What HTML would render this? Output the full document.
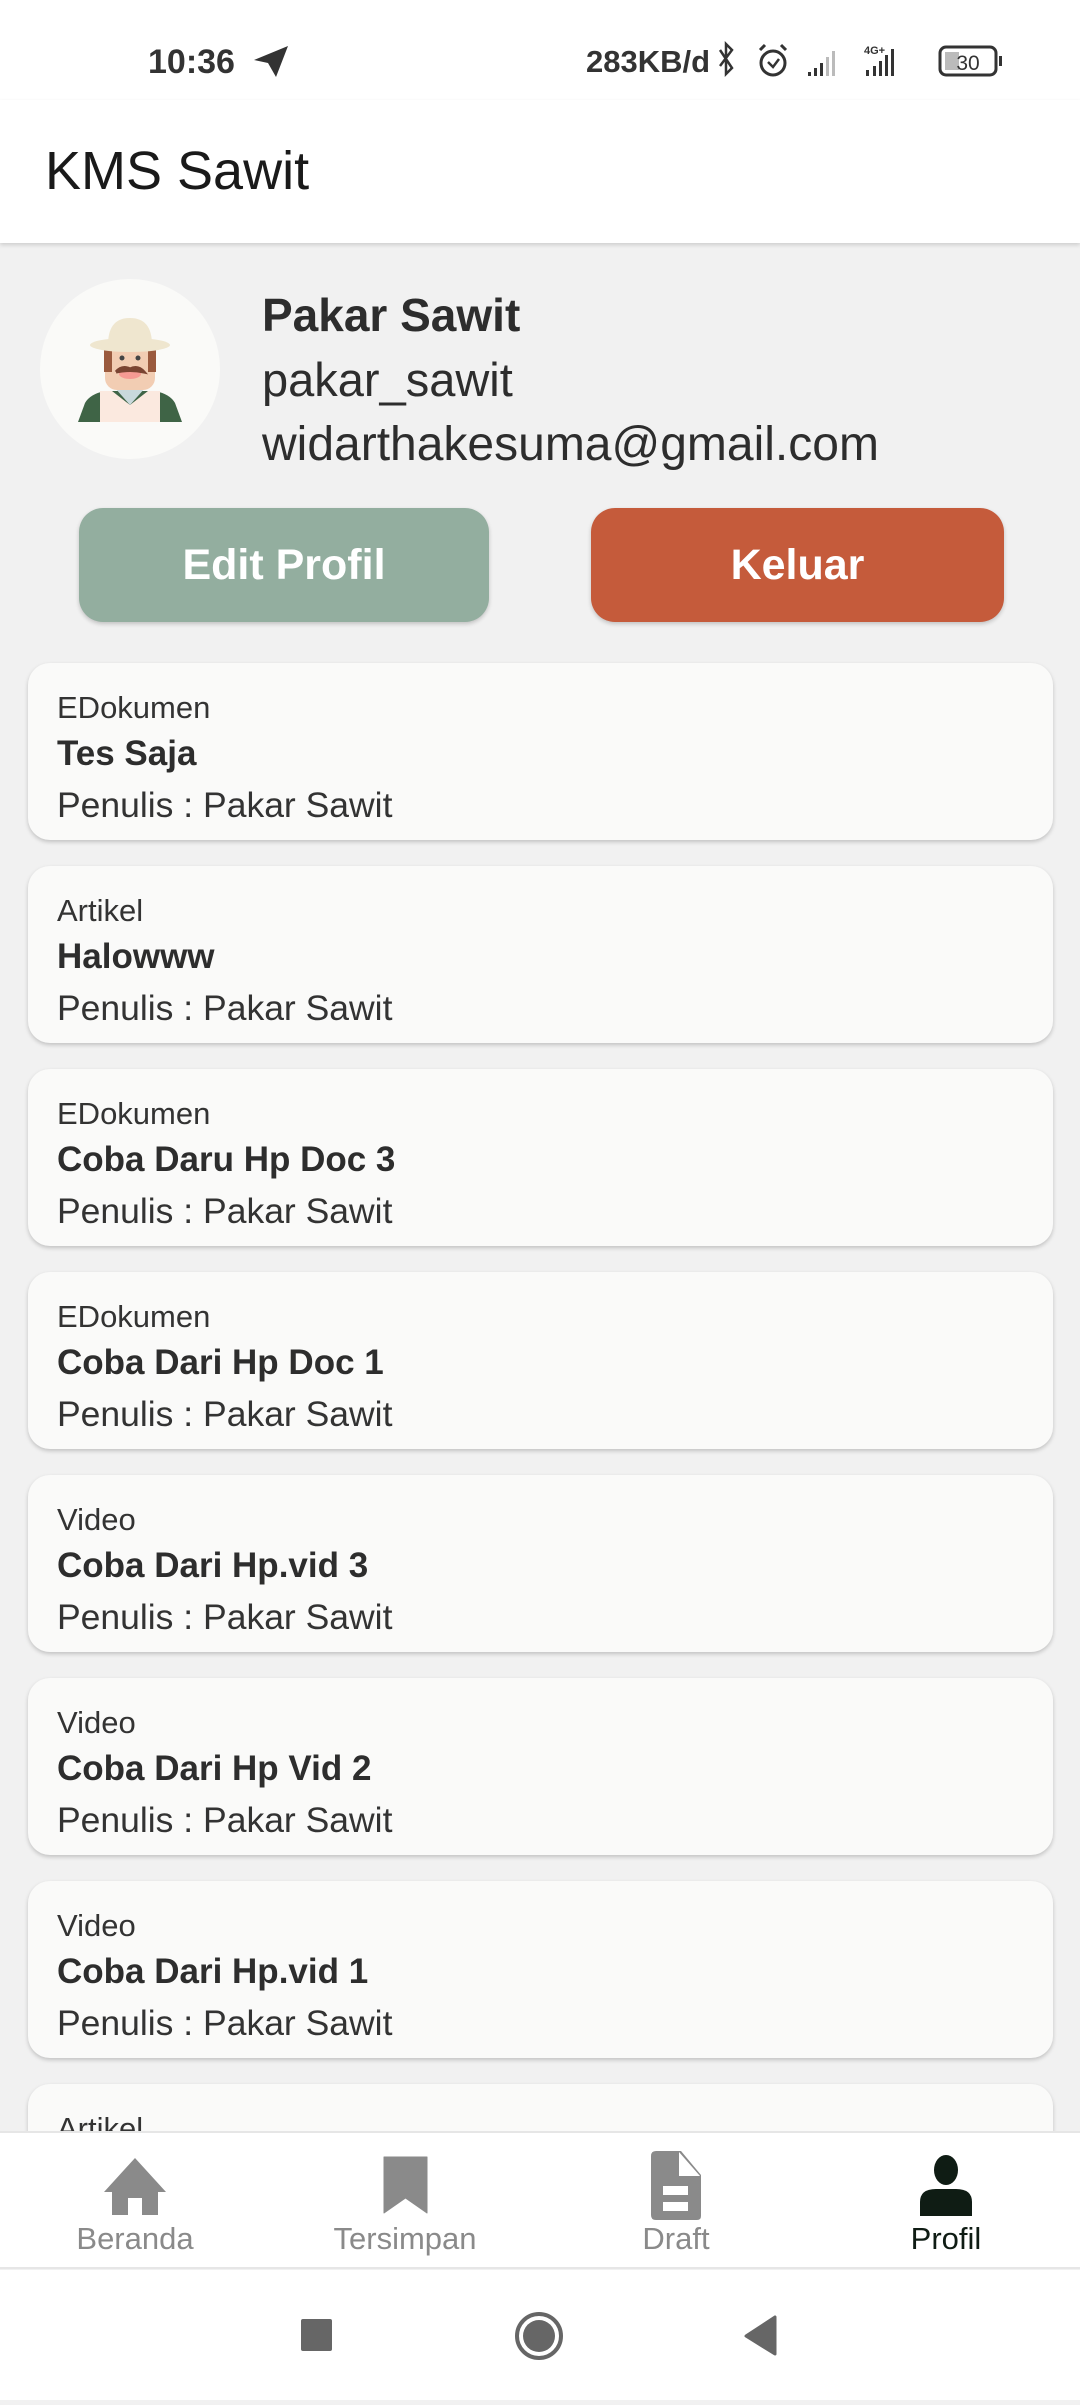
<!DOCTYPE html>
<html><head><meta charset="utf-8">
<style>
*{margin:0;padding:0;box-sizing:border-box}
body{width:1080px;height:2400px;background:#f1f1f1;font-family:"Liberation Sans",Roboto,sans-serif;position:relative;overflow:hidden;color:#2d2d2d}
.abs{position:absolute}
.status{top:0;left:0;width:1080px;height:100px;background:#fff}
.appbar{top:100px;left:0;width:1080px;height:143px;background:#fff;box-shadow:0 2px 4px rgba(0,0,0,.15)}
.btn{top:508px;height:114px;border-radius:24px;color:#fff;font-weight:bold;font-size:43px;display:flex;align-items:center;justify-content:center;box-shadow:0 2px 4px rgba(0,0,0,.2)}
.card{left:28px;width:1025px;height:177px;background:#fafaf9;border-radius:22px;box-shadow:0 2px 4px rgba(0,0,0,.2)}
.card .t{position:absolute;left:29px;top:27px;font-size:31px;color:#333}
.card .h{position:absolute;left:29px;top:71px;font-size:35px;font-weight:bold;color:#2d2d2d}
.card .a{position:absolute;left:29px;top:122px;font-size:35.5px;color:#333}
.nav{top:2131px;left:0;width:1080px;height:138px;background:#fff;border-top:2px solid #e6e6e6;border-bottom:2px solid #e6e6e6}
.lbl{position:absolute;top:88px;font-size:31px;color:#8a8a8a;transform:translateX(-50%)}
.sys{top:2270px;left:0;width:1080px;height:130px;background:#fff}
</style></head><body>
<div class="abs status">
 <div class="abs" style="left:148px;top:43px;font-size:34px;font-weight:bold;color:#333">10:36</div>
 <svg class="abs" style="left:252px;top:44px" width="38" height="34" viewBox="0 0 38 34"><path d="M36 2 L2 16 L16 19 L24 33 Z" fill="#333"/></svg>
 <div class="abs" style="left:586px;top:44px;font-size:31px;font-weight:bold;color:#333">283KB/d</div>
 <svg class="abs" style="left:716px;top:40px" width="300" height="42" viewBox="0 0 300 42">
  <path d="M4 10 L16 28 L10 34 L10 4 L16 10 L4 26" stroke="#333" stroke-width="2.5" fill="none"/>
  <circle cx="57" cy="23" r="12" stroke="#333" stroke-width="3" fill="none"/>
  <path d="M44 10 l5 -5 M70 10 l-5 -5" stroke="#333" stroke-width="3"/>
  <path d="M52 22 L57 27 L63 19" stroke="#333" stroke-width="2.5" fill="none"/>
  <path d="M92 36 h3 v-4 h-3z M98 36 h3 v-8 h-3z M104 36 h3 v-13 h-3z" fill="#333"/>
  <path d="M110 36 h3 v-19 h-3z M116 36 h3 v-25 h-3z" fill="#bbb"/>
  <text x="148" y="14" font-size="11" font-weight="bold" fill="#333" font-family="Liberation Sans">4G+</text>
  <path d="M150 36 h3 v-6 h-3z M157 36 h3 v-10 h-3z M163 36 h3 v-15 h-3z M169 36 h3 v-21 h-3z M175 36 h3 v-27 h-3z" fill="#333"/>
  <rect x="224" y="7" width="56" height="28" rx="6" stroke="#333" stroke-width="3" fill="none"/>
  <rect x="229" y="12" width="14" height="18" fill="#bbb"/>
  <rect x="283" y="16" width="3" height="10" fill="#333"/>
  <text x="252" y="30" font-size="21" fill="#333" text-anchor="middle" font-family="Liberation Sans">30</text>
 </svg>
</div>
<div class="abs appbar"><div class="abs" style="left:45px;top:40px;font-size:54px;color:#1a1a1a">KMS Sawit</div></div>

<svg class="abs" style="left:30px;top:270px" width="200" height="200" viewBox="0 0 200 200">
 <circle cx="100" cy="99" r="90" fill="#fafaf8"/>
 <path d="M48 152 L55 133 Q60 124 75 121 L125 121 Q140 124 145 133 L152 152 Z" fill="#3f6446"/>
 <path d="M70 121 L70 152 L130 152 L130 121 L118 121 L100 135 L82 121 Z" fill="#fbe9df"/>
 <path d="M85 118 L100 135 L115 118 Z" fill="#c9d9dc"/>
 <rect x="75" y="80" width="50" height="40" rx="12" fill="#f2cdb3"/>
 <rect x="74" y="80" width="8" height="22" fill="#9a5a3e"/>
 <rect x="118" y="80" width="8" height="22" fill="#9a5a3e"/>
 <ellipse cx="100" cy="104" rx="11" ry="5" fill="#f59a93"/>
 <path d="M86 102 Q92 95 100 99 Q108 95 114 102 Q100 99 86 102" fill="#7a4432" stroke="#7a4432" stroke-width="3"/>
 <circle cx="92" cy="88" r="2.5" fill="#444"/><circle cx="108" cy="88" r="2.5" fill="#444"/>
 <ellipse cx="100" cy="75" rx="40" ry="7" fill="#efe6cf"/>
 <path d="M78 75 Q78 48 100 48 Q122 48 122 75 Z" fill="#efe6cf"/>
</svg>
<div class="abs" style="left:262px;top:288px;font-size:46px;font-weight:bold;color:#2d2d2d">Pakar Sawit</div>
<div class="abs" style="left:262px;top:352px;font-size:47px;color:#2d2d2d">pakar_sawit</div>
<div class="abs" style="left:262px;top:417px;font-size:48px;color:#2d2d2d">widarthakesuma@gmail.com</div>

<div class="abs btn" style="left:79px;width:410px;background:#93ae9f">Edit Profil</div>
<div class="abs btn" style="left:591px;width:413px;background:#c55b3b">Keluar</div>

<div class="abs card" style="top:663px"><div class="t">EDokumen</div><div class="h">Tes Saja</div><div class="a">Penulis : Pakar Sawit</div></div>
<div class="abs card" style="top:866px"><div class="t">Artikel</div><div class="h">Halowww</div><div class="a">Penulis : Pakar Sawit</div></div>
<div class="abs card" style="top:1069px"><div class="t">EDokumen</div><div class="h">Coba Daru Hp Doc 3</div><div class="a">Penulis : Pakar Sawit</div></div>
<div class="abs card" style="top:1272px"><div class="t">EDokumen</div><div class="h">Coba Dari Hp Doc 1</div><div class="a">Penulis : Pakar Sawit</div></div>
<div class="abs card" style="top:1475px"><div class="t">Video</div><div class="h">Coba Dari Hp.vid 3</div><div class="a">Penulis : Pakar Sawit</div></div>
<div class="abs card" style="top:1678px"><div class="t">Video</div><div class="h">Coba Dari Hp Vid 2</div><div class="a">Penulis : Pakar Sawit</div></div>
<div class="abs card" style="top:1881px"><div class="t">Video</div><div class="h">Coba Dari Hp.vid 1</div><div class="a">Penulis : Pakar Sawit</div></div>
<div class="abs card" style="top:2084px"><div class="t">Artikel</div></div>

<div class="abs nav">
 <svg class="abs" style="left:0;top:0" width="1080" height="90" viewBox="0 0 1080 90">
  <path d="M135 25 L104 59 L112 59 L112 82 L128 82 L128 65 L142 65 L142 82 L158 82 L158 59 L166 59 Z" fill="#8a8a8a"/>
  <path d="M384 24 h43 v56 l-21.5 -15 l-21.5 15 Z" fill="#8a8a8a" stroke="#8a8a8a" stroke-width="1" stroke-linejoin="round"/>
  <path d="M656 18 h25 l20 24 v41 q0 4 -4 4 h-41 q-5 0 -5 -5 v-59 q0 -5 5 -5 Z" fill="#8a8a8a"/>
  <path d="M679 19 v24 h21 Z" fill="#fff"/>
  <rect x="663" y="53" width="25" height="9" fill="#fff"/><rect x="663" y="69" width="25" height="9" fill="#fff"/>
  <ellipse cx="946" cy="37" rx="12" ry="15" fill="#0f1c14"/>
  <path d="M920 83 v-14 q0 -13 16 -13 h20 q16 0 16 13 v14 Z" fill="#0f1c14"/>
 </svg>
 <div class="lbl" style="left:135px">Beranda</div>
 <div class="lbl" style="left:405px">Tersimpan</div>
 <div class="lbl" style="left:676px">Draft</div>
 <div class="lbl" style="left:946px;color:#0f1c14">Profil</div>
</div>
<div class="abs sys">
 <svg width="1080" height="130" viewBox="0 0 1080 130">
  <rect x="301" y="49" width="31" height="32" rx="2" fill="#666"/>
  <circle cx="539" cy="66" r="22" fill="none" stroke="#666" stroke-width="4"/>
  <circle cx="539" cy="66" r="16" fill="#666"/>
  <path d="M775 47 L775 84 L746 66 Z" fill="#666" stroke="#666" stroke-width="3" stroke-linejoin="round"/>
 </svg>
</div>
</body></html>
